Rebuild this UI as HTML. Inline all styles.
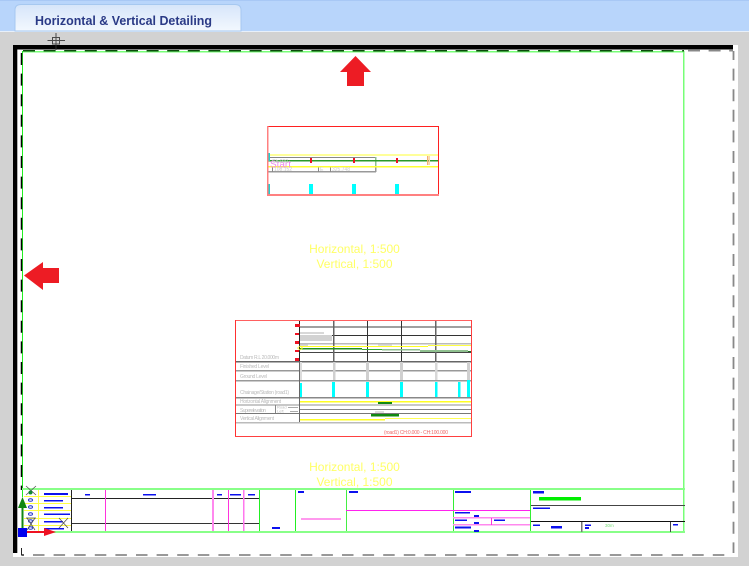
<!DOCTYPE html>
<html><head><meta charset="utf-8"><style>
html,body{margin:0;padding:0;background:#d2d2d2}
body{width:749px;height:566px;overflow:hidden;position:relative;font-family:"Liberation Sans",sans-serif}
svg{position:absolute;left:0;top:0}
</style></head><body>
<svg width="749" height="566" viewBox="0 0 749 566" xmlns="http://www.w3.org/2000/svg">
<defs><linearGradient id="t" x1="0" y1="0" x2="0" y2="1"><stop offset="0" stop-color="#d6e5fa"/><stop offset="1" stop-color="#f3f8fe"/></linearGradient></defs>
<rect width="749" height="566" fill="#d2d2d2"/>
<rect width="749" height="31" fill="#b8d5fb"/>
<rect y="0" width="749" height="1" fill="#a8c8f5"/>
<rect y="31" width="749" height="1" fill="#e8f0fa"/>
<path d="M15 31V10Q15 4.500 21 4.500H235Q241 4.500 241 10V31Z" fill="url(#t)" stroke="#a6c8f0" stroke-width="1"/>
<text x="35" y="25" font-size="12.500" font-weight="bold" fill="#2a3a86" textLength="177" lengthAdjust="spacingAndGlyphs">Horizontal &amp; Vertical Detailing</text>

<rect x="13" y="45" width="725" height="512" fill="#fff"/>
<rect x="13" y="45" width="720" height="4.500" fill="#000"/>
<rect x="13" y="45" width="4.300" height="508" fill="#000"/>

<g shape-rendering="crispEdges">
<rect x="22" y="51" width="662" height="1.500" fill="#77ff77"/>
<rect x="22" y="51" width="1" height="446" fill="#22ee22"/>
<rect x="683" y="51" width="1.500" height="481" fill="#77ff77"/>
</g>
<line x1="22" y1="50.700" x2="684" y2="50.700" stroke="#0a4a0a" stroke-width="1.500" stroke-dasharray="12 8.600" stroke-dashoffset="-1"/>
<line x1="684" y1="50.700" x2="733" y2="50.700" stroke="#888" stroke-width="1.600" stroke-dasharray="12 8.600" stroke-dashoffset="-4"/>
<line x1="21.500" y1="50" x2="21.500" y2="490" stroke="#000" stroke-width="1.500" stroke-dasharray="12 8.600" stroke-dashoffset="-3"/>
<line x1="733.500" y1="51" x2="733.500" y2="553" stroke="#888" stroke-width="1.800" stroke-dasharray="12 8.600" stroke-dashoffset="3"/>
<line x1="22" y1="555" x2="733" y2="555" stroke="#999" stroke-width="2" stroke-dasharray="11.500 9.100" stroke-dashoffset="-11"/>
<path d="M21.500 548V555H24" fill="none" stroke="#222" stroke-width="1"/>

<g fill="none" stroke="#333" stroke-width="1" opacity=".85">
<path d="M47.500 40.500H65M56 33V50" />
<rect x="52.500" y="37.500" width="7" height="6.500"/>
</g>

<path d="M355.500 56L371 72H364V86H347V72H340Z" fill="#ed1c24"/>
<path d="M24 275.500L43 262V268H59V283H43V290Z" fill="#ed1c24"/>

<g shape-rendering="crispEdges">
<rect x="267" y="154" width="171" height="2" fill="#ffff99"/>
<rect x="267" y="157" width="109" height="1" fill="#888"/>
<rect x="267" y="171" width="109" height="1.500" fill="#999"/>
<rect x="272" y="167" width="1" height="5" fill="#888"/>
<rect x="318" y="167" width="1" height="5" fill="#888"/>
<rect x="330" y="167" width="1" height="5" fill="#888"/>
<rect x="375" y="157" width="1.500" height="9" fill="#8fc08f"/>
<rect x="375" y="167" width="1.500" height="5" fill="#999"/>
<rect x="268" y="160" width="170" height="1.500" fill="#2a9a2a"/>
<rect x="267" y="166" width="171" height="1.500" fill="#ffff33"/>
<rect x="310" y="158" width="2" height="5" fill="#ee1122"/>
<rect x="353" y="158" width="2" height="5" fill="#ee1122"/>
<rect x="396" y="158" width="2" height="5" fill="#ee1122"/>
<rect x="427" y="156" width="1.500" height="9" fill="#f4b070"/>
<rect x="429" y="156" width="1" height="9" fill="#f8d8a8"/>
<rect x="268" y="153" width="2" height="8" fill="#22cccc"/>
<rect x="268" y="184" width="2" height="10" fill="#22cccc"/>
<rect x="309" y="184" width="4" height="10" fill="#00ffff"/>
<rect x="352" y="184" width="4" height="10" fill="#00ffff"/>
<rect x="395" y="184" width="4" height="10" fill="#00ffff"/>
<rect x="267" y="126" width="172" height="1" fill="#ff2020"/>
<rect x="438" y="126" width="1" height="69" fill="#ff2020"/>
<rect x="267" y="126" width="1.500" height="69" fill="#ff8080"/>
<rect x="267" y="194" width="172" height="2" fill="#ff8080"/>
</g>
<text x="270" y="167.500" font-size="10" fill="#ee88ee" textLength="21">Start</text>
<text x="272" y="163" font-size="5" fill="#ccc">Ch:000</text>
<text x="274" y="171" font-size="5" fill="#ccc">108.152</text>
<text x="320" y="171" font-size="5" fill="#ccc">E</text>
<text x="332" y="171" font-size="5" fill="#ccc">325.748</text>

<g font-size="12" fill="#ffff66" text-anchor="middle">
<text x="354.500" y="253">Horizontal, 1:500</text>
<text x="354.500" y="268">Vertical, 1:500</text>
<text x="354.500" y="471">Horizontal, 1:500</text>
<text x="354.500" y="486">Vertical, 1:500</text>
</g>

<g shape-rendering="crispEdges">
<rect x="299" y="332" width="25" height="2" fill="#d8d8d8"/>
<rect x="299" y="335" width="33" height="6" fill="#d2d2d2"/>
<rect x="300" y="344" width="8" height="3" fill="#d8d8d8"/>
<rect x="378" y="344" width="14" height="2" fill="#ddd"/>
<rect x="300" y="326" width="171" height="2" fill="#a0a0a0"/>
<rect x="332" y="335" width="139" height="1" fill="#333"/>
<rect x="300" y="343" width="171" height="1.500" fill="#bbb"/>
<rect x="300" y="352" width="171" height="1" fill="#444"/>
<rect x="235" y="361" width="236" height="1.500" fill="#666"/>
<rect x="235" y="370" width="236" height="1.500" fill="#999"/>
<rect x="235" y="380" width="236" height="1.500" fill="#999"/>
<rect x="235" y="397" width="236" height="1.500" fill="#888"/>
<rect x="235" y="404" width="236" height="2" fill="#c8c8c8"/>
<rect x="300" y="409" width="171" height="1" fill="#888"/>
<rect x="235" y="413" width="236" height="1" fill="#777"/>
<rect x="235" y="422" width="236" height="1.500" fill="#bbb"/>
<rect x="299" y="320" width="1" height="41" fill="#222"/>
<rect x="299" y="361" width="1" height="61" fill="#666"/>
<rect x="333" y="320" width="1.500" height="41" fill="#666"/>
<rect x="367" y="320" width="1" height="41" fill="#333"/>
<rect x="401" y="320" width="1" height="41" fill="#333"/>
<rect x="435" y="320" width="1.500" height="41" fill="#666"/>
<rect x="300" y="362" width="2" height="18" fill="#ddd"/>
<rect x="333" y="362" width="2.500" height="18" fill="#d0d0d0"/>
<rect x="366" y="362" width="3" height="18" fill="#d0d0d0"/>
<rect x="400" y="362" width="3" height="18" fill="#d0d0d0"/>
<rect x="435" y="362" width="2.500" height="18" fill="#d8d8d8"/>
<rect x="467" y="362" width="3" height="18" fill="#d0d0d0"/>
<rect x="300" y="346" width="128" height="1" fill="#ffff22"/>
<rect x="428" y="345" width="43" height="1" fill="#ffff44"/>
<rect x="300" y="348" width="62" height="1.500" fill="#1f8f1f"/>
<rect x="362" y="349" width="20" height="1" fill="#33aa33"/>
<rect x="382" y="349" width="38" height="1.500" fill="#8fc08f"/>
<rect x="420" y="350" width="48" height="2" fill="#8fc08f"/>
<rect x="468" y="351" width="3" height="1" fill="#1f6f1f"/>
<rect x="300" y="383" width="2" height="14" fill="#00ffff"/>
<rect x="332" y="382" width="3" height="15" fill="#00ffff"/>
<rect x="366" y="382" width="3" height="15" fill="#00ffff"/>
<rect x="400" y="382" width="3" height="15" fill="#00ffff"/>
<rect x="435" y="382" width="2.500" height="15" fill="#00ffff"/>
<rect x="458" y="382" width="2.500" height="15" fill="#00ffff"/>
<rect x="467" y="380" width="3" height="17" fill="#00ffff"/>
<rect x="300" y="401" width="171" height="1.500" fill="#ffff22"/>
<rect x="378" y="402" width="14" height="2" fill="#118811"/>
<rect x="375" y="411" width="9" height="2" fill="#ddd"/>
<rect x="371" y="414" width="28" height="2.500" fill="#118811"/>
<rect x="300" y="419" width="85" height="1.500" fill="#ffff22"/>
<rect x="385" y="418" width="86" height="1" fill="#ffff55"/>
<rect x="275" y="405" width="1" height="8" fill="#888"/>
<rect x="288" y="407" width="10" height="1" fill="#aaa"/>
<rect x="290" y="411" width="8" height="1" fill="#aaa"/>
<rect x="295" y="324" width="5" height="3" fill="#ee1122"/>
<rect x="295" y="333" width="4" height="2" fill="#ee1122"/>
<rect x="295" y="341" width="4" height="3" fill="#ee1122"/>
<rect x="295" y="350" width="4" height="2" fill="#ee1122"/>
<rect x="295" y="358" width="4" height="3" fill="#ee1122"/>
<rect x="235" y="320" width="237" height="1" fill="#ff6060"/>
<rect x="471" y="320" width="1" height="117" fill="#ff4040"/>
<rect x="235" y="320" width="1" height="117" fill="#ff3030"/>
<rect x="235" y="436" width="237" height="1" fill="#ff4040"/>
</g>
<path d="M297.500 348L300 346L302.500 348L300 350Z" fill="none" stroke="#ffff22" stroke-width=".8"/>
<g font-size="5" fill="#bbb">
<text x="240" y="359" textLength="39">Datum R.L 20.000m</text>
<text x="240" y="368" textLength="29">Finished Level</text>
<text x="240" y="378" textLength="27">Ground Level</text>
<text x="240" y="394" textLength="49">Chainage/Station (road1)</text>
<text x="240" y="403" textLength="41">Horizontal Alignment</text>
<text x="240" y="412" textLength="26">Superelevation</text>
<text x="240" y="420" textLength="34">Vertical Alignment</text>
<text x="277" y="408.500" font-size="4">Road</text>
<text x="277" y="412.500" font-size="4">Left</text>
</g>
<text x="384" y="434" font-size="5" fill="#ee6a6a" textLength="64">(road1) CH:0.000 - CH:100.000</text>

<g shape-rendering="crispEdges">
<rect x="24" y="496" width="47" height="1" fill="#ffff44"/>
<rect x="24" y="503" width="47" height="1" fill="#ffff44"/>
<rect x="24" y="510" width="47" height="1" fill="#ffff44"/>
<rect x="24" y="518" width="47" height="1" fill="#ffff44"/>
<rect x="24" y="525" width="47" height="1" fill="#ffff44"/>
<rect x="38" y="489" width="1" height="43" fill="#ffff44"/>
<rect x="72" y="498" width="188" height="1" fill="#222"/>
<rect x="72" y="523" width="188" height="1" fill="#333"/>
<rect x="71" y="489" width="1" height="43" fill="#222"/>
<rect x="105" y="489" width="1" height="43" fill="#ff33dd"/>
<rect x="212" y="489" width="2" height="43" fill="#ff88ee"/>
<rect x="228" y="489" width="1" height="43" fill="#ff33dd"/>
<rect x="243" y="489" width="1.500" height="43" fill="#ff77ee"/>
<rect x="259" y="489" width="1" height="43" fill="#22ee22"/>
<rect x="295" y="489" width="1" height="43" fill="#22ee22"/>
<rect x="346" y="489" width="1" height="43" fill="#44ee44"/>
<rect x="453" y="489" width="1" height="43" fill="#33ee33"/>
<rect x="530" y="489" width="1" height="43" fill="#33ee33"/>
<rect x="22" y="488" width="663" height="2" fill="#88ff88"/>
<rect x="22" y="531" width="663" height="2" fill="#88ff88"/>
<rect x="346" y="510" width="184" height="1" fill="#ff22ee"/>
<rect x="301" y="518" width="40" height="2" fill="#ff99ee"/>
<rect x="453" y="517" width="77" height="1.500" fill="#ff88ee"/>
<rect x="453" y="524" width="77" height="1.500" fill="#ff88ee"/>
<rect x="491" y="518" width="1" height="7" fill="#ff33dd"/>
<rect x="531" y="505" width="154" height="1" fill="#444"/>
<rect x="531" y="521" width="154" height="1" fill="#111"/>
<rect x="581" y="522" width="1.500" height="10" fill="#777"/>
<rect x="670" y="522" width="1" height="10" fill="#444"/>
<rect x="539" y="497" width="42" height="3.500" fill="#00ee00"/>
</g>
<g fill="#0b10ee" shape-rendering="crispEdges">
<rect x="44" y="493" width="24" height="2"/><rect x="44" y="500" width="19" height="1.500"/>
<rect x="44" y="507" width="19" height="1.500"/><rect x="44" y="513.500" width="26" height="1.500"/>
<rect x="44" y="521" width="19" height="1.500"/><rect x="44" y="528" width="20" height="1.500"/>
<rect x="85" y="494" width="5" height="1.500"/><rect x="143" y="494" width="13" height="1.500"/>
<rect x="217" y="494" width="5" height="1.500"/><rect x="230" y="494" width="11" height="1.500"/><rect x="248" y="494" width="7" height="1.500"/>
<rect x="298" y="491" width="6" height="2"/><rect x="349" y="491" width="9" height="2"/><rect x="455" y="491" width="16" height="2"/>
<rect x="272" y="527" width="8" height="2"/>
<rect x="455" y="512" width="15" height="1.500"/><rect x="474" y="515" width="5" height="2"/>
<rect x="455" y="519.500" width="12" height="1.500"/><rect x="494" y="519.500" width="11" height="1.500"/><rect x="474" y="522" width="5" height="2"/>
<rect x="455" y="526.500" width="16" height="2"/><rect x="474" y="530" width="5" height="2"/>
<rect x="533" y="491" width="11" height="2.500"/><rect x="533" y="507.500" width="17" height="1.500"/>
<rect x="533" y="524.500" width="7" height="1.500"/><rect x="551" y="526" width="11" height="2.500"/>
<rect x="585" y="524.500" width="6" height="1.500"/><rect x="585" y="527" width="4" height="2"/>
<rect x="673" y="524" width="5" height="1.500"/>
</g>
<text x="605" y="527" font-size="4.500" fill="#77dd77">30m</text>
<g fill="none" stroke="#2233cc" stroke-width="1">
<ellipse cx="30.500" cy="500" rx="2" ry="1.300"/><ellipse cx="30.500" cy="507" rx="2" ry="1.300"/>
<ellipse cx="30.500" cy="514" rx="2" ry="1.300"/><ellipse cx="30.500" cy="521" rx="2" ry="1.300"/><ellipse cx="30.500" cy="528" rx="2" ry="1.300"/>
</g>
<g fill="none" stroke="#555" stroke-width=".8">
<path d="M26 486L36 495M36 486L26 495"/>
<path d="M27 518L35 530M35 518L27 530"/>
<path d="M59 518L68 528M68 518L59 528"/>
<path d="M26 518H36"/>
</g>
<circle cx="30.500" cy="492.500" r="2" fill="#118833"/>
<rect x="21.500" y="505" width="2" height="24" fill="#118811"/>
<path d="M22.500 497L27 508H18Z" fill="#118811"/>
<rect x="18" y="528" width="9" height="9" fill="#0000ee"/>
<rect x="27" y="531" width="18" height="2" fill="#ee1122"/>
<path d="M56 532L44 528V536Z" fill="#ee1122"/>
</svg>
</body></html>
